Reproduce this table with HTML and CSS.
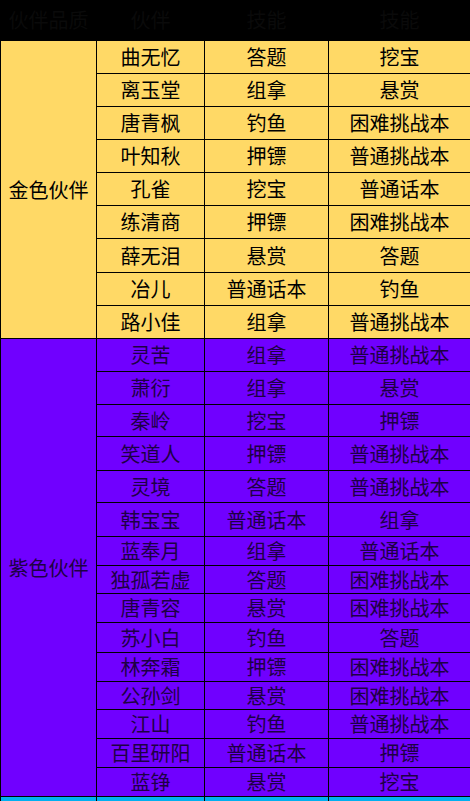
FILE: index.html
```html
<!DOCTYPE html>
<html>
<head>
<meta charset="utf-8">
<link rel="stylesheet" href="styles.css">
</head>
<body>
<table class="grid">
  <colgroup>
    <col class="c1"><col class="c2"><col class="c3"><col class="c4">
  </colgroup>
  <thead>
    <tr class="head"><th>伙伴品质</th><th>伙伴</th><th>技能</th><th>技能</th></tr>
  </thead>
  <tbody class="gold">
    <tr class="r33"><td class="grp" rowspan="9">金色伙伴</td><td>曲无忆</td><td>答题</td><td>挖宝</td></tr>
    <tr class="r33"><td>离玉堂</td><td>组拿</td><td>悬赏</td></tr>
    <tr class="r33"><td>唐青枫</td><td>钓鱼</td><td>困难挑战本</td></tr>
    <tr class="r33"><td>叶知秋</td><td>押镖</td><td>普通挑战本</td></tr>
    <tr class="r33"><td>孔雀</td><td>挖宝</td><td>普通话本</td></tr>
    <tr class="r33"><td>练清商</td><td>押镖</td><td>困难挑战本</td></tr>
    <tr class="r34"><td>薛无泪</td><td>悬赏</td><td>答题</td></tr>
    <tr class="r33"><td>冶儿</td><td>普通话本</td><td>钓鱼</td></tr>
    <tr class="r33"><td>路小佳</td><td>组拿</td><td>普通挑战本</td></tr>
  </tbody>
  <tbody class="purple">
    <tr class="r33"><td class="grp" rowspan="15">紫色伙伴</td><td>灵苦</td><td>组拿</td><td>普通挑战本</td></tr>
    <tr class="r33"><td>萧衍</td><td>组拿</td><td>悬赏</td></tr>
    <tr class="r32"><td>秦岭</td><td>挖宝</td><td>押镖</td></tr>
    <tr class="r34"><td>笑道人</td><td>押镖</td><td>普通挑战本</td></tr>
    <tr class="r32"><td>灵境</td><td>答题</td><td>普通挑战本</td></tr>
    <tr class="r34"><td>韩宝宝</td><td>普通话本</td><td>组拿</td></tr>
    <tr class="r29"><td>蓝奉月</td><td>组拿</td><td>普通话本</td></tr>
    <tr class="r28"><td>独孤若虚</td><td>答题</td><td>困难挑战本</td></tr>
    <tr class="r29"><td>唐青容</td><td>悬赏</td><td>困难挑战本</td></tr>
    <tr class="r30"><td>苏小白</td><td>钓鱼</td><td>答题</td></tr>
    <tr class="r29"><td>林奔霜</td><td>押镖</td><td>困难挑战本</td></tr>
    <tr class="r28"><td>公孙剑</td><td>悬赏</td><td>困难挑战本</td></tr>
    <tr class="r29"><td>江山</td><td>钓鱼</td><td>普通挑战本</td></tr>
    <tr class="r29"><td>百里研阳</td><td>普通话本</td><td>押镖</td></tr>
    <tr class="r29"><td>蓝铮</td><td>悬赏</td><td>挖宝</td></tr>
  </tbody>
  <tbody class="cyan">
    <tr class="r29"><td></td><td></td><td></td><td></td></tr>
  </tbody>
</table>
</body>
</html>
```

FILE: styles.css
```css
html, body {
  margin: 0;
  padding: 0;
  background: #000;
}
body {
  width: 470px;
  height: 801px;
  overflow: hidden;
  font-family: "Noto Sans CJK SC", "Noto Sans", sans-serif;
}
.grid {
  width: 470px;
  table-layout: fixed;
  border-collapse: collapse;
  font-size: 20px;
  line-height: 1;
}
.c1 { width: 96px; }
.c2 { width: 108px; }
.c3 { width: 124px; }
.c4 { width: 142px; }
.head th {
  height: 40px;
  padding: 0;
  font-weight: normal;
  color: #0a0a0a;
  background: #000;
  border: none;
  text-align: center;
  vertical-align: middle;
}
.grid td {
  padding: 0;
  border: 1px solid #000;
  text-align: center;
  vertical-align: middle;
  white-space: nowrap;
}
.gold td { background: #ffd966; color: #000; }
.purple td { background: #7000ff; color: #1e0045; }
.cyan td { background: #00b0f0; }
.grp { text-align: center; }
.r28 td { height: 27px; }
.r29 td { height: 28px; }
.r30 td { height: 29px; }
.r32 td { height: 31px; }
.r33 td { height: 32px; }
.r34 td { height: 33px; }
.grid td.grp { height: auto; }
```
